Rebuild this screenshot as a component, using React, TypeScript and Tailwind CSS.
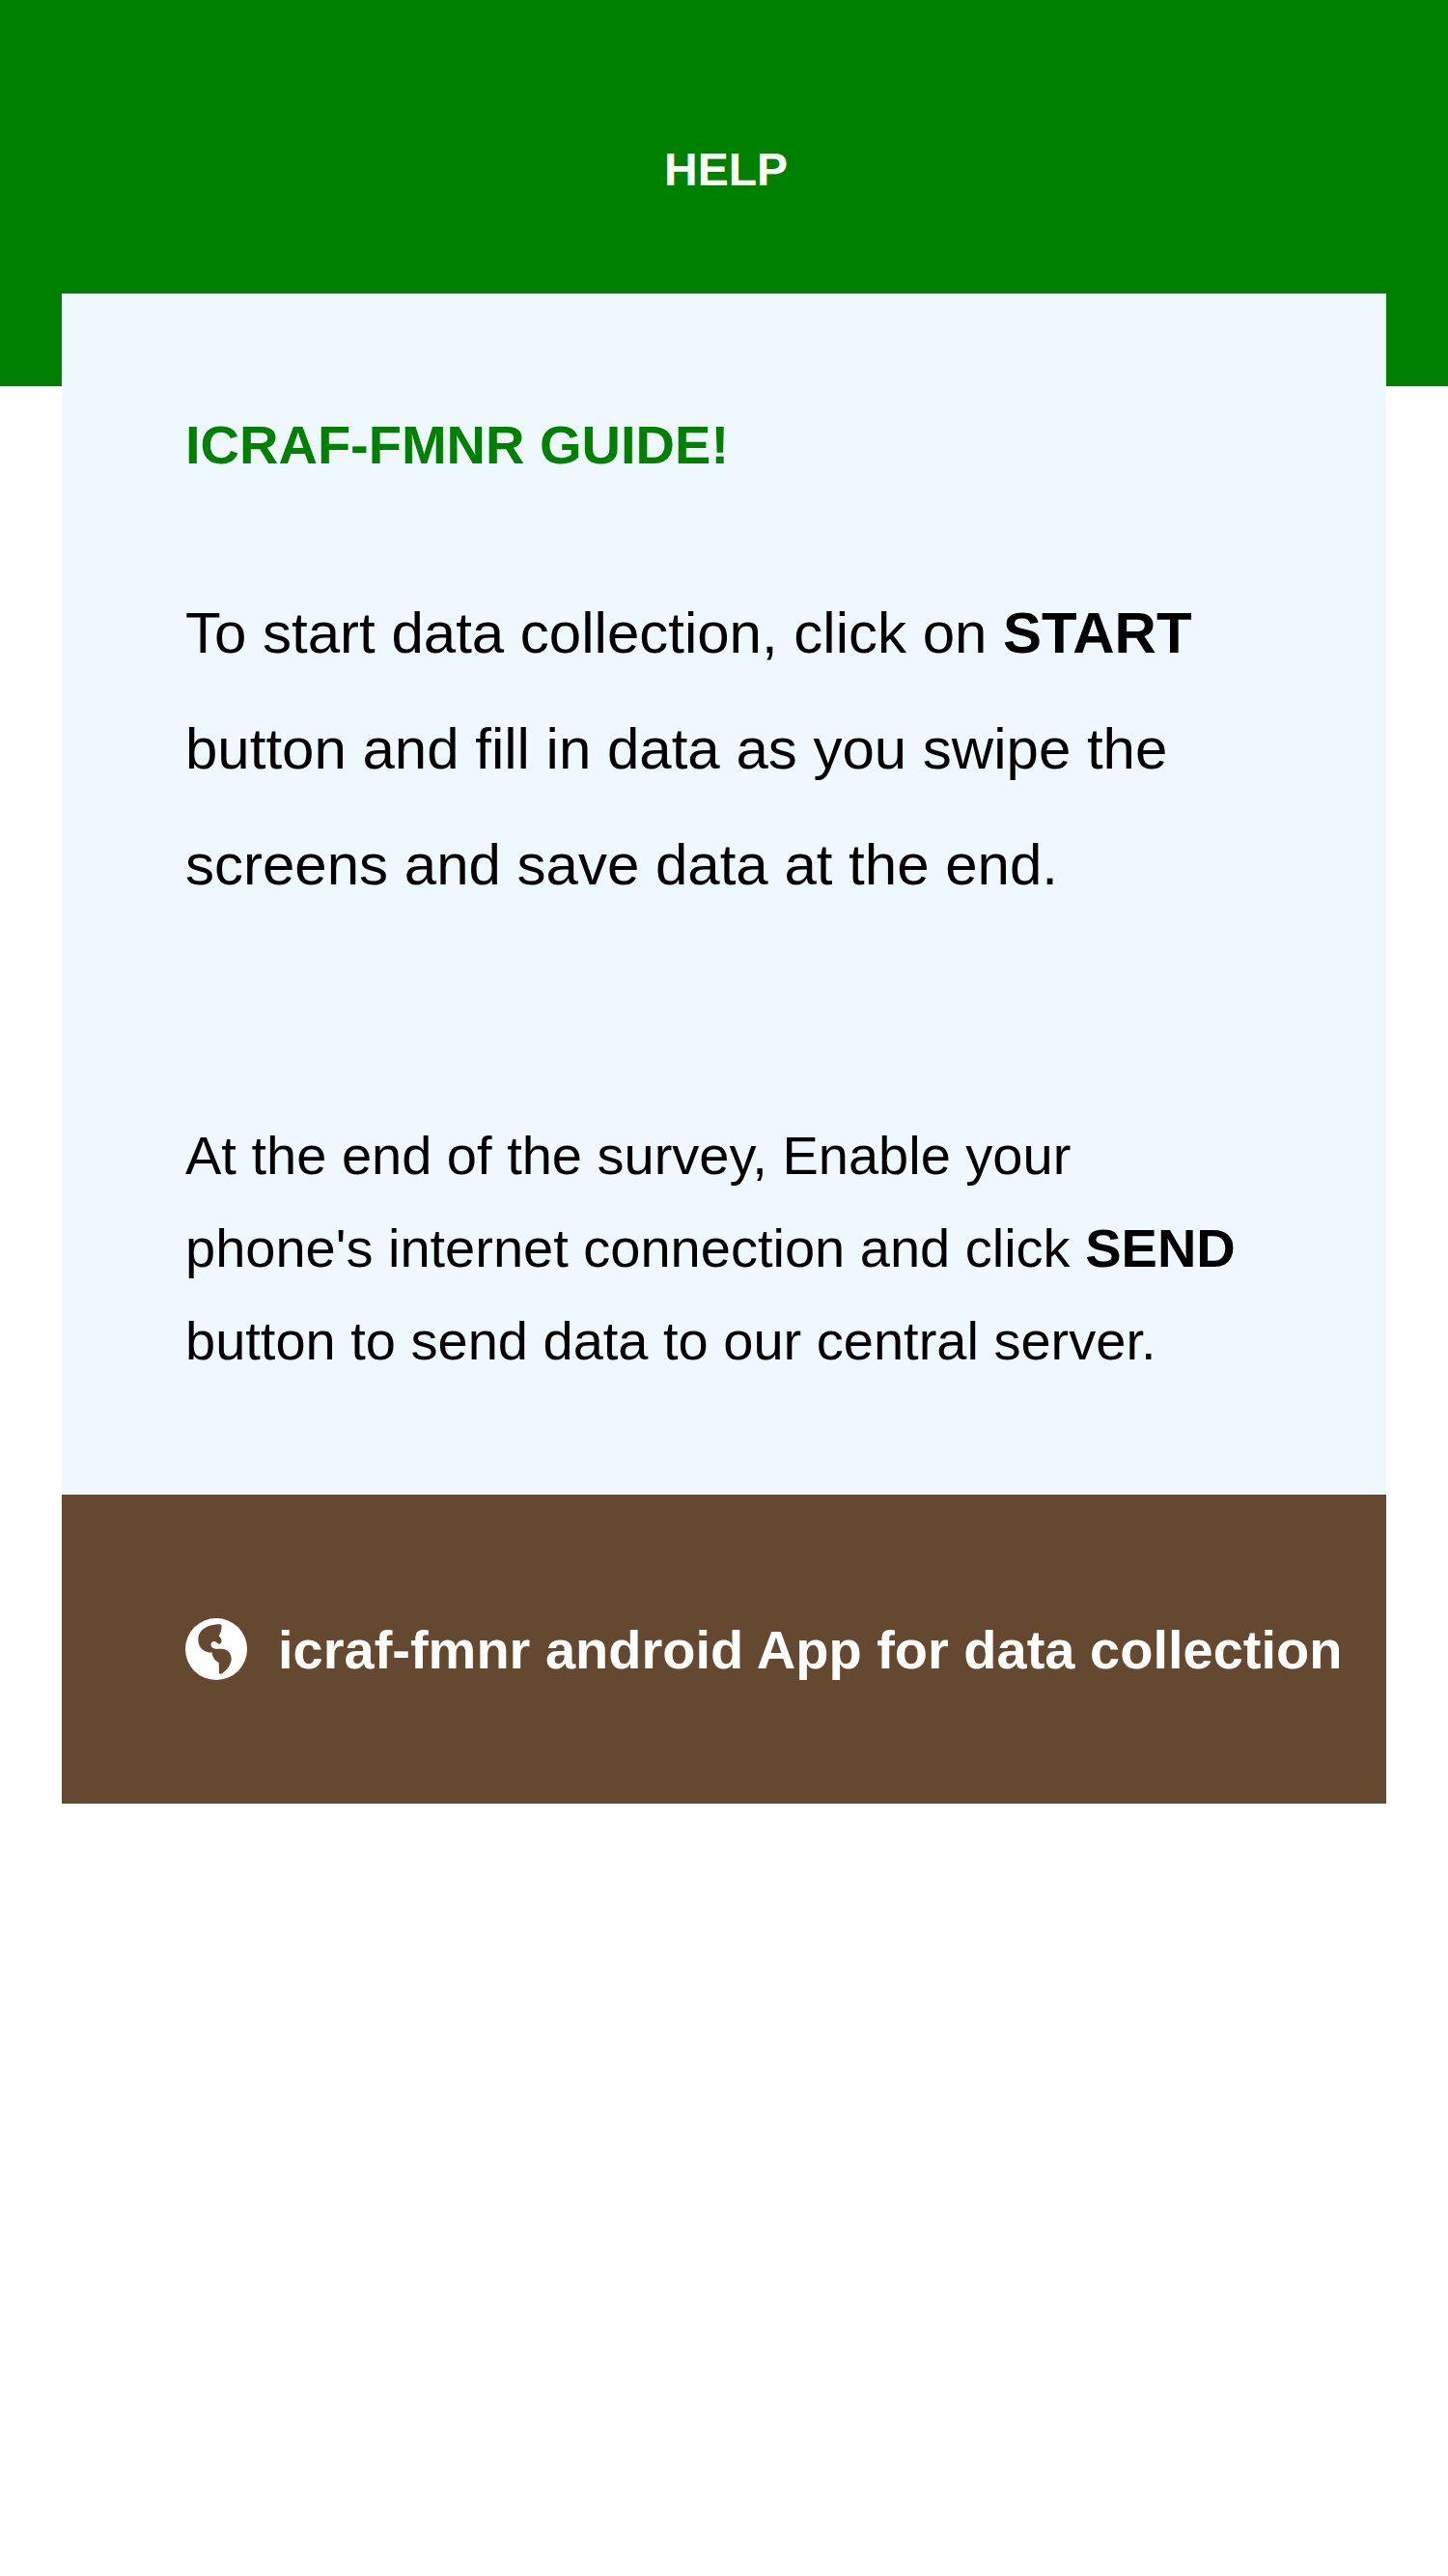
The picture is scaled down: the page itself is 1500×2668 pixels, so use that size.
import React from 'react';

function GlobeIcon() {
  return (
    <svg className="size-16 shrink-0" viewBox="0 0 64 64" fill="none" aria-hidden="true">
      <circle cx="32" cy="32" r="32" fill="white" />
      <path
        d="M32 6.4C34.8 6.1 37.4 6.5 37.6 7.8C37.8 12 36.6 15.6 34.7 18.3L36.4 20.2C37.8 22.2 37.7 25.4 36.5 26.2C35.2 27.2 33.6 26.8 32.8 25.6C31.5 23.5 28.5 23.4 27.1 25.5C25.6 28 27.3 30.4 29.3 31.2C31.8 32.2 36 31.7 39.5 31.9C44.8 32.6 48.2 37.7 47.7 43C47 48.6 43.2 53.4 38.5 57C36.5 58.2 35 57.6 34.9 56.2L34.8 46.2C31 44.5 27.7 40 27.6 35.6C20 35.8 13.5 31 13.3 22.7C13.1 13 21 7.2 32 6.4Z"
        fill="#654830"
      />
    </svg>
  );
}

export default function App() {
  return (
    <div className="min-h-[2668px] bg-white font-['Liberation_Sans',Arial,sans-serif] text-black">
      <header className="flex h-[400px] justify-center bg-[#008000] pt-36 pl-1">
        <h1 className="text-[48px] leading-[63px] font-bold text-white">HELP</h1>
      </header>
      <main className="mx-16 -mt-24 bg-[#f0f8ff]">
        <section className="h-[1244px] px-32 pt-32">
          <h2 className="text-[56px] leading-[57px] font-bold text-[#008000]">ICRAF-FMNR GUIDE!</h2>
          <p className="mt-[107px] text-[60px] leading-[120px] whitespace-nowrap">
            To start data collection, click on <b>START</b>
            <br />
            button and fill in data as you swipe the
            <br />
            screens and save data at the end.
          </p>
          <p className="mt-[193px] text-[56px] leading-[96px] whitespace-nowrap">
            At the end of the survey, Enable your
            <br />
            phone's internet connection and click <b>SEND</b>
            <br />
            button to send data to our central server.
          </p>
        </section>
        <footer className="flex h-80 items-center gap-8 bg-[#654830] px-32 text-[56px] font-bold whitespace-nowrap text-white">
          <GlobeIcon />
          <span className="pt-0.5">icraf-fmnr android App for data collection</span>
        </footer>
      </main>
    </div>
  );
}
